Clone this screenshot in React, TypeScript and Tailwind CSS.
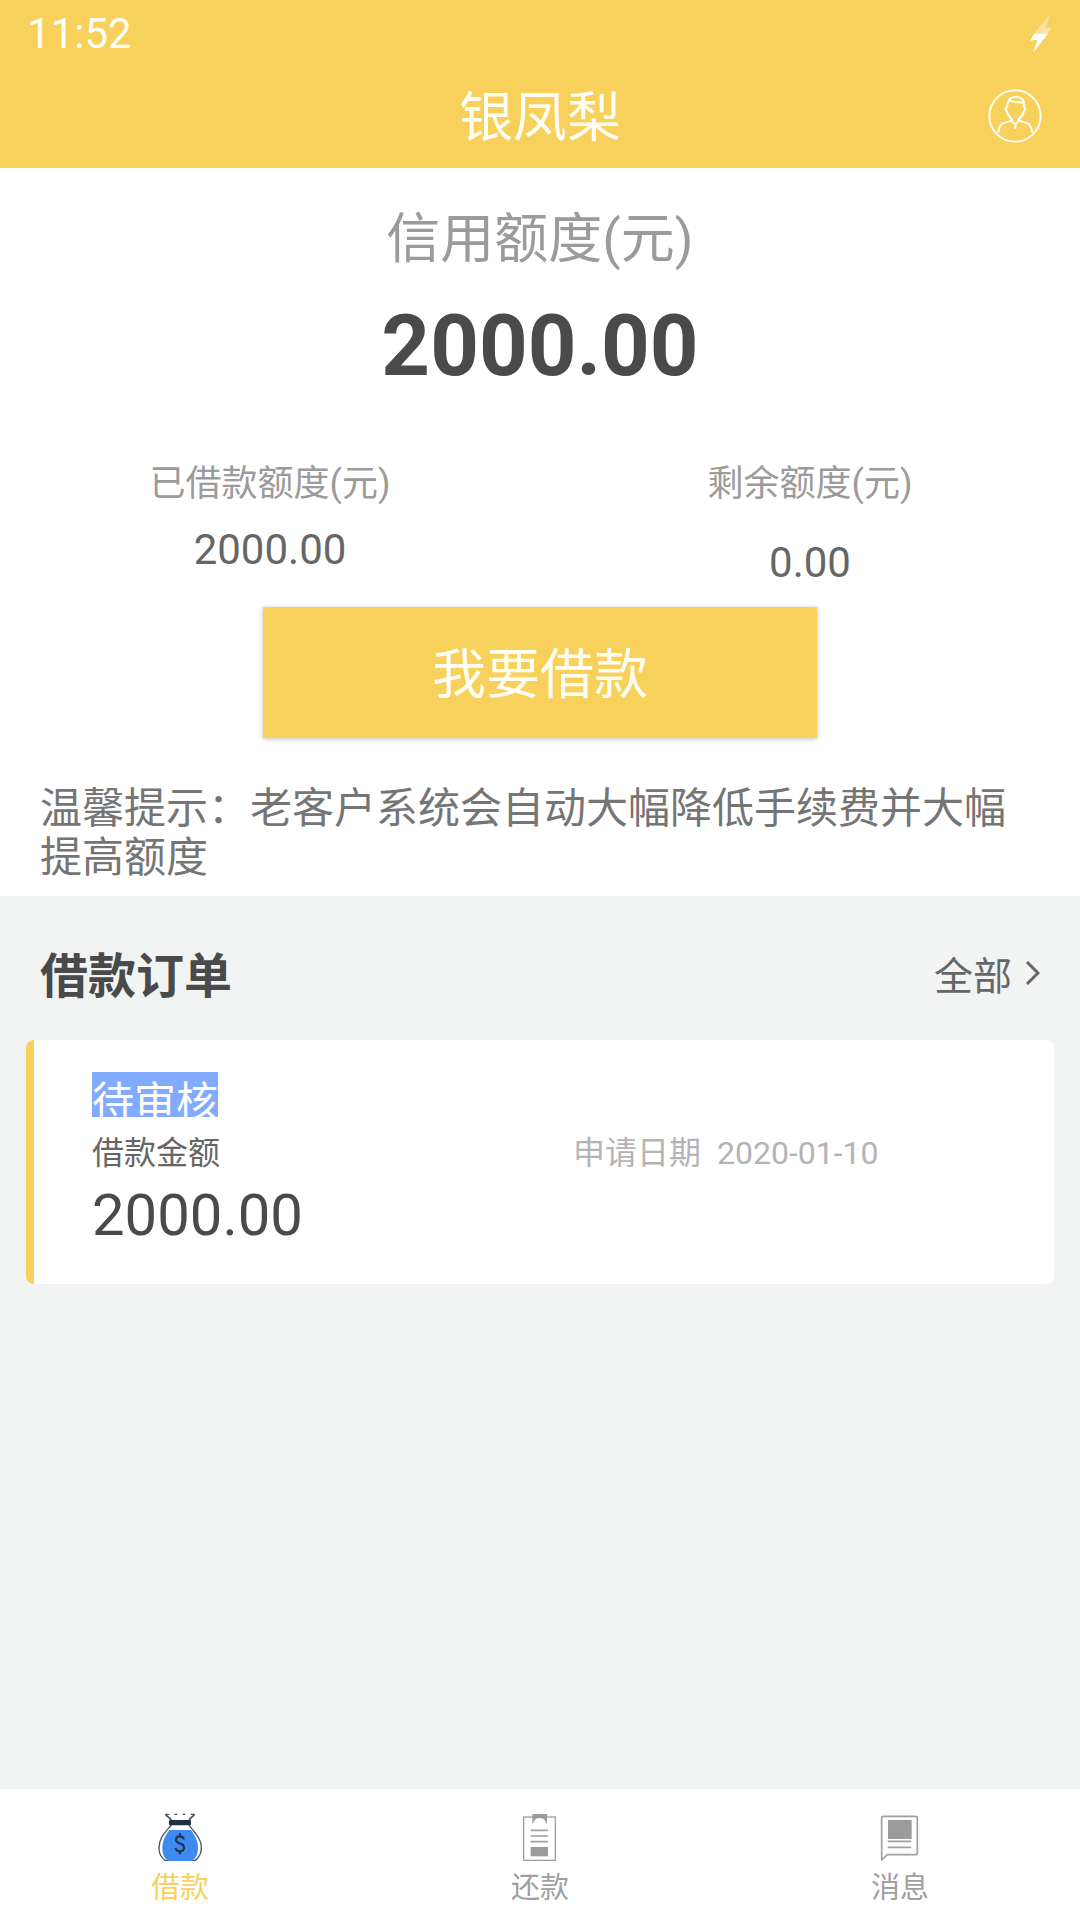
import React from 'react';

const MoneyBagIcon = () => (
  <svg viewBox="0 0 144 144" className="h-12 w-12" fill="none" aria-hidden="true">
    <path
      d="M46 36 C34 52 9 70 9 105 C9 124 18 136 28 143 H116 C128 135 136 122 136 104 C136 72 110 54 99 36"
      stroke="#4d5561"
      strokeWidth="4"
    />
    <path d="M40 51 H105 C116 66 126 84 126 104 C126 122 119 136 108 144 H36 C25 136 19 122 19 104 C19 84 29 66 40 51Z" fill="#3d8bf2" />
    <path d="M29 4 C30 11 42 10 47 24 M115 4 C114 11 103 10 98 24" stroke="#4d5561" strokeWidth="5" />
    <path d="M28 4 H40 M55 4 H64 M80 4 H88 M104 4 H116" stroke="#4d5561" strokeWidth="4" />
    <rect x="39" y="21" width="66" height="16" rx="3" fill="#202f42" />
    <path
      d="M83 79 C81 67 60 67 60 80 C60 95 84 87 84 103 C84 119 60 119 59 105 M72 61 V72 M72 113 V124"
      stroke="#1e3556"
      strokeWidth="7"
    />
  </svg>
);

const ClipboardIcon = () => (
  <svg viewBox="0 0 144 144" className="h-12 w-12" fill="none" aria-hidden="true">
    <rect x="23" y="12" width="95" height="130" stroke="#a0a0a0" strokeWidth="4" />
    <path d="M49 3 H93 V34 C87 24 86 15 71 15 C56 15 55 24 49 34Z" fill="#9b9b9b" />
    <path d="M44 52 H96 M44 69 H96 M44 86 H96" stroke="#a0a0a0" strokeWidth="5" />
    <rect x="44" y="102" width="52" height="28" fill="#9b9b9b" />
  </svg>
);

const MessageIcon = () => (
  <svg viewBox="0 0 144 144" className="h-12 w-12" fill="none" aria-hidden="true">
    <path
      d="M17 141 V16 Q17 10 23 10 H118 Q124 10 124 16 V119 Q124 125 118 125 H34Z"
      stroke="#a0a0a0"
      strokeWidth="5"
      strokeLinejoin="round"
    />
    <rect x="36" y="21" width="71" height="57" fill="#9b9b9b" />
    <path d="M37 85 H104 M37 103 H104" stroke="#a0a0a0" strokeWidth="5" strokeLinecap="round" />
  </svg>
);

const UserIcon = () => (
  <svg viewBox="0 0 162 162" className="h-[54px] w-[54px]" fill="none" stroke="#fffdf0" strokeWidth="6" strokeLinejoin="round" aria-hidden="true">
    <circle cx="81" cy="81" r="77" />
    <path d="M61 38 C64 28 73 24 84 24 C99 24 108 32 108 46 V52 L112 59 L107 69 C105 78 98 86 91 91 V97 L82 107 L72 97 V91 C66 86 59 78 57 69 L52 59 L58 52 C57 45 59 42 61 38Z" />
    <path d="M62 32 C72 43 92 36 108 44" />
    <path d="M72 91 L64 97 L44 103 Q34 107 31 131 M91 91 L100 97 L119 103 Q129 107 133 131 M82 107 V120" />
  </svg>
);

const BoltIcon = () => (
  <svg viewBox="0 0 66 120" className="h-10 w-[22px]" aria-hidden="true">
    <path d="M61 0 L47 42 L66 39 L54 59 H12Z" fill="#fae3a0" />
    <path d="M12 59 H54 L9 117 L22 77 L0 80Z" fill="#ffffff" />
  </svg>
);

const limits = [
  { label: '已借款额度(元)', amount: '2000.00', spacing: 'mt-5' },
  { label: '剩余额度(元)', amount: '0.00', spacing: 'mt-[33px]' },
];

const orders = [
  { status: '待审核', amount: '2000.00', date: '2020-01-10' },
];

const tabs = [
  { name: '借款', icon: <MoneyBagIcon />, color: 'text-[#f7d15c]', active: true },
  { name: '还款', icon: <ClipboardIcon />, color: 'text-[#a0a0a0]', active: false },
  { name: '消息', icon: <MessageIcon />, color: 'text-[#a0a0a0]', active: false },
];

const App = () => {
  return (
    <div className="min-h-screen flex flex-col bg-[#f2f4f3] font-[Roboto,'Noto_Sans_CJK_SC',sans-serif]" lang="zh-CN">
      <header className="bg-[#f7d15c] text-[#fffef5]">
        <div className="flex h-16 items-center justify-between pt-1 pl-[27px] pr-7">
          <span className="text-[42px] leading-[50px]">11:52</span>
          <BoltIcon />
        </div>
        <div className="grid h-[104px] grid-cols-[1fr_auto_1fr] items-center px-[38px]">
          <h1 className="col-start-2 pt-[6px] text-[54px] leading-[64px]">银凤梨</h1>
          <button type="button" aria-label="我的" className="justify-self-end">
            <UserIcon />
          </button>
        </div>
      </header>

      <main className="flex-1">
        {/* Credit summary */}
        <section className="bg-white px-10 pt-10 pb-[14px]">
          <h2 className="text-center text-[54px] leading-[64px] text-[#9b9b9b]">信用额度(元)</h2>
          <p className="mt-[26px] text-center text-[85px] leading-[96px] font-bold text-[#4a4a4a]">2000.00</p>

          <div className="-mx-10 mt-[69px] grid grid-cols-2 text-center">
            {limits.map((item) => (
              <div key={item.label}>
                <p className="text-[36px] leading-[42px] text-[#9b9b9b]">{item.label}</p>
                <p className={`text-[42px] leading-[50px] text-[#666666] ${item.spacing}`}>{item.amount}</p>
              </div>
            ))}
          </div>

          <div className="mt-[19px] flex justify-center">
            <button type="button" className="bg-[#f7d15c] px-[169px] pt-[37px] pb-[30px] text-[54px] leading-[64px] text-[#fffef5] shadow-[0_1px_5px_rgba(0,0,0,0.25)]">
              我要借款
            </button>
          </div>

          <p className="mt-[46px] text-[42px] leading-[49px] text-[#757575]">
            温馨提示：老客户系统会自动大幅降低手续费并大幅提高额度
          </p>
        </section>

        {/* Orders */}
        <section className="px-[26px] pt-[49px]">
          <div className="flex items-center justify-between px-[14px]">
            <h2 className="text-[48px] leading-[64px] font-bold text-[#4a4a4a]">借款订单</h2>
            <a href="#orders" className="flex items-start gap-3 text-[39px] leading-[64px] text-[#666666]">
              全部
              <svg viewBox="0 0 16 24" className="mt-4 h-6 w-4" fill="none" stroke="#666666" strokeWidth="3" aria-hidden="true">
                <path d="M3 1 L14 12 L3 23" />
              </svg>
            </a>
          </div>

          {orders.map((order) => (
            <article key={order.date} className="mt-[31px] overflow-hidden rounded-lg bg-white">
              <div className="border-l-8 border-[#f7d15c] pt-8 pb-[35px] pl-[58px]">
                <p className="h-[45px] w-fit overflow-hidden bg-[#82aaff] text-[42px] leading-[62px] text-white">{order.status}</p>
                <div className="mt-4 grid grid-cols-2 text-[32px] leading-10">
                  <p className="text-[#666666]">借款金额</p>
                  <p className="flex gap-4 text-[#b4b4b4]">
                    <span>申请日期</span>
                    <time dateTime={order.date}>{order.date}</time>
                  </p>
                </div>
                <p className="mt-2 text-[58px] leading-[68px] text-[#4a4a4a]">{order.amount}</p>
              </div>
            </article>
          ))}
        </section>
      </main>

      <nav className="grid grid-cols-3 bg-white pt-6 pb-[14px]">
        {tabs.map((tab) => (
          <a
            key={tab.name}
            href="#"
            aria-current={tab.active ? 'page' : undefined}
            className={`flex flex-col items-center gap-[10px] text-[29px] leading-[35px] ${tab.color}`}
          >
            {tab.icon}
            {tab.name}
          </a>
        ))}
      </nav>
    </div>
  );
};

export default App;
